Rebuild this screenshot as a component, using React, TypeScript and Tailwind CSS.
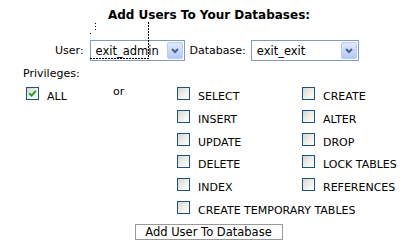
import React from "react";

const font = "font-['DejaVu_Sans',Verdana,sans-serif]";

const Box = ({ checked }: { checked?: boolean }) => (
  <span className="w-[13px] h-[13px] border border-[#1c5180] bg-linear-to-br from-[#d6d6d0] via-[#eeeeea] to-white flex items-center justify-center shrink-0">
    {checked && (
      <svg width="9" height="9" viewBox="0 0 9 9">
        <path d="M1.2 4.2 L3.6 6.6 L7.8 1.8" stroke="#21a121" strokeWidth="2" fill="none" />
      </svg>
    )}
  </span>
);

const Priv = ({ label, wide }: { label: string; wide?: boolean }) => (
  <div className={`flex items-start ${wide ? "col-span-2" : ""}`}>
    <Box />
    <span className="ml-[8px] mt-[3px] text-[11px] leading-[13px] text-black whitespace-nowrap">{label}</span>
  </div>
);

const Select = ({ value, width }: { value: string; width: string }) => (
  <div className={`${width} h-[21px] border border-[#7f9db9] bg-white flex items-center justify-between pl-[5px] pr-[1px]`}>
    <span className="text-[11.5px] leading-[14px] text-black">{value}</span>
    <span className="w-[16px] h-[17px] rounded-[2px] border border-[#b9cbf3] bg-linear-to-b from-[#e1eafe] to-[#b4c8f6] flex items-center justify-center">
      <svg width="8" height="6" viewBox="0 0 8 6">
        <path d="M1 1 L4 4 L7 1" stroke="#4d6185" strokeWidth="2" fill="none" />
      </svg>
    </span>
  </div>
);

export default function App() {
  const privs: [string, string][] = [
    ["SELECT", "CREATE"],
    ["INSERT", "ALTER"],
    ["UPDATE", "DROP"],
    ["DELETE", "LOCK TABLES"],
    ["INDEX", "REFERENCES"],
  ];

  return (
    <div className={`relative w-[418px] h-[252px] bg-white text-black ${font}`}>
      <div className="pt-[8px] text-center text-[12px] leading-[14px] font-bold">Add Users To Your Databases:</div>

      {/* user / database selects */}
      <div className="mt-[18px] flex items-center text-[11px] leading-[13px]">
        <span className="ml-[55px]">User:</span>
        <div className="ml-[6px]">
          <Select value="exit_admin" width="w-[95px]" />
        </div>
        <span className="ml-[5px]">Database:</span>
        <div className="ml-[5px]">
          <Select value="exit_exit" width="w-[108px]" />
        </div>
      </div>

      <div className="mt-[6px] ml-[23px] text-[11px] leading-[13px]">Privileges:</div>

      <div className="mt-[7px] flex">
        <div className="w-[177px] pl-[26px] flex items-start shrink-0">
          <div className="w-[87px] flex items-start">
            <Box checked />
            <span className="ml-[8px] mt-[3px] text-[11px] leading-[13px]">ALL</span>
          </div>
          <span className="-mt-[2px] text-[11px] leading-[13px]">or</span>
        </div>
        <div className="grid grid-cols-[125px_auto] auto-rows-[22.8px]">
          {privs.map(([a, b]) => (
            <React.Fragment key={a}>
              <Priv label={a} />
              <Priv label={b} />
            </React.Fragment>
          ))}
          <Priv label="CREATE TEMPORARY TABLES" wide />
        </div>
      </div>

      <div className="flex justify-center">
        <button className="ml-[-1px] w-[148px] h-[16px] border border-[#9a9a9a] bg-white text-[11.5px] leading-[14px] text-black flex items-center justify-center">
          Add User To Database
        </button>
      </div>

      {/* stray dotted focus marks */}
      <svg className="absolute left-0 top-0 pointer-events-none" width="418" height="70">
        <line x1="148.5" y1="22" x2="148.5" y2="59" stroke="#000" strokeDasharray="2 1" />
        <line x1="90" y1="58.5" x2="148" y2="58.5" stroke="#000" strokeDasharray="2 1" />
        <line x1="95.5" y1="23" x2="95.5" y2="32" stroke="#000" strokeDasharray="1 2" />
        <rect x="90" y="33" width="1" height="1" fill="#000" />
      </svg>
    </div>
  );
}
